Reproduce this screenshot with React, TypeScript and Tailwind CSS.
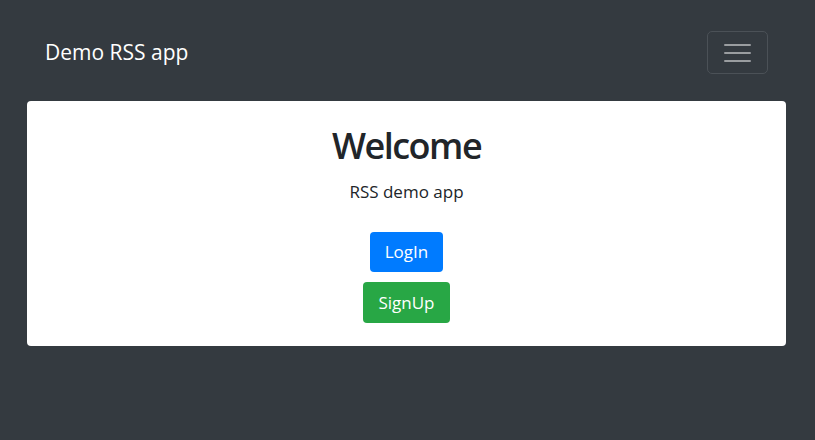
export default function App() {
  return (
    <div
      className="min-h-[440px] w-full bg-[#343a40] pt-[31px]"
      style={{ fontFamily: '"Open Sans", "Noto Sans", sans-serif' }}
    >
      <nav className="flex items-center justify-between pl-[45px] pr-[47px]">
        <span className="text-[21px] leading-none text-white">Demo RSS app</span>
        <button className="flex h-[43px] w-[61px] flex-col items-center justify-center gap-[6px] rounded-[5px] border border-[#4b5157]">
          <span className="block h-[2px] w-[27px] rounded bg-[#9a9da0]" />
          <span className="block h-[2px] w-[27px] rounded bg-[#9a9da0]" />
          <span className="block h-[2px] w-[27px] rounded bg-[#9a9da0]" />
        </button>
      </nav>
      <main className="mt-[27px] ml-[27px] mr-[29px] flex flex-col items-center rounded-[4px] bg-white pt-[21px] pb-[23px]">
        <h1 className="text-[36px] font-semibold leading-[48px] tracking-[-1.5px] text-[#212529]">Welcome</h1>
        <p className="mt-[10px] text-[17px] leading-[24px] text-[#212529]">RSS demo app</p>
        <button className="mt-[28px] h-[40px] rounded-[4px] bg-[#007bff] px-[15px] text-[17px] text-white">
          LogIn
        </button>
        <button className="mt-[10px] h-[41px] rounded-[4px] bg-[#28a745] px-[15px] text-[17px] text-white">
          SignUp
        </button>
      </main>
    </div>
  );
}
